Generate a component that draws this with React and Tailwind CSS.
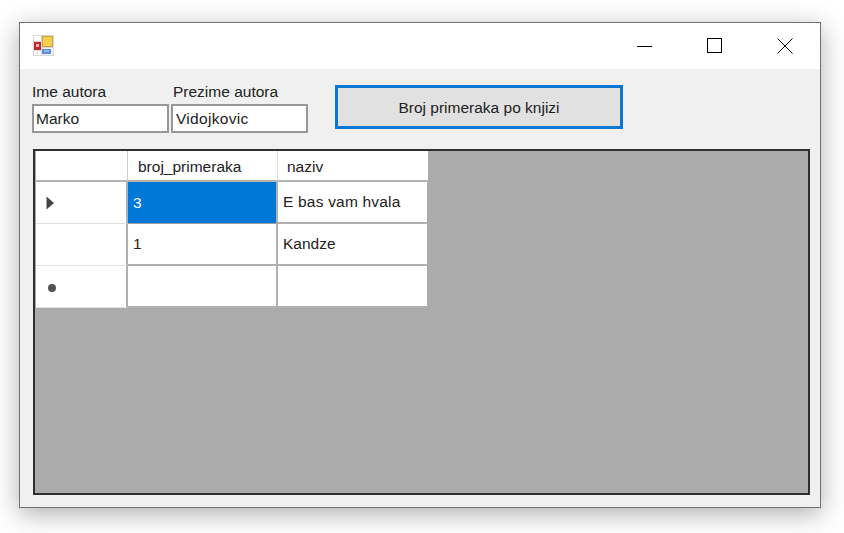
function AppIcon() {
  return (
    <svg width="21" height="21" viewBox="0 0 21 21" className="block mt-[-2px]">
      <rect x="0" y="0" width="21" height="21" fill="#d9d9d9" />
      <rect x="1" y="1" width="7" height="5" fill="#ffffff" />
      <rect x="1" y="7" width="7" height="8" fill="#c2262c" />
      <rect x="3" y="9" width="3" height="3" fill="#eeb0a8" />
      <rect x="1" y="16" width="3" height="4" fill="#ffffff" />
      <rect x="5" y="16" width="3" height="4" fill="#ffffff" />
      <rect x="9" y="1" width="11" height="11" fill="#c9a23a" />
      <rect x="10" y="2" width="9" height="9" fill="#fbcf4e" />
      <rect x="9" y="13" width="11" height="7" fill="#f2f2f2" />
      <rect x="9" y="14" width="9" height="5" fill="#5b8fd8" />
      <rect x="11" y="15" width="5" height="2" fill="#8fb8ee" />
    </svg>
  );
}

function Header({ className, children }) {
  return <div className={"flex items-center pt-[2px] bg-white text-[#222] " + className}>{children}</div>;
}

function Cell({ className, children }) {
  return <div className={"flex items-center pl-[5px] bg-white text-[#222] " + className}>{children}</div>;
}

export default function App() {
  return (
    <div className="w-[844px] h-[533px] bg-white pt-[22px] pl-[19px] overflow-hidden font-['Liberation_Sans',Arial,sans-serif] text-[15.5px] leading-[18px] text-[#222]">
      <div className="w-[802px] h-[486px] border border-[#717171] bg-[#f0f0f0] shadow-[0_6px_24px_rgba(0,0,0,0.32)] flex flex-col">
        {/* title bar */}
        <div className="h-[46px] bg-white flex items-center justify-between pl-[13px] shrink-0">
          <AppIcon />
          <div className="flex h-full">
            <div className="w-[70px] flex items-center justify-center">
              <svg width="16" height="16" viewBox="0 0 16 16"><path d="M0 8.5H15" stroke="#000" fill="none" /></svg>
            </div>
            <div className="w-[70px] flex items-center justify-center">
              <svg width="16" height="16" viewBox="0 0 16 16"><rect x="0.5" y="0.5" width="14" height="14" stroke="#000" fill="none" /></svg>
            </div>
            <div className="w-[70px] flex items-center justify-center">
              <svg width="16" height="16" viewBox="0 0 16 16"><path d="M0.5 0.5L15.5 15.5M15.5 0.5L0.5 15.5" stroke="#000" fill="none" /></svg>
            </div>
          </div>
        </div>

        {/* content */}
        <div className="flex-1 flex flex-col pl-[12px] pr-[10px] pb-[12px]">
          <div className="flex items-start h-[80px] pt-[13px]">
            <div className="flex flex-col w-[139px]">
              <label className="h-[22px] flex items-center leading-[18px] mt-[-1px]">Ime autora</label>
              <div className="w-[137px] h-[29px] mt-[1px] border-2 border-[#979797] bg-white flex items-center pl-[2px] leading-[18px]">Marko</div>
            </div>
            <div className="flex flex-col w-[164px]">
              <label className="h-[22px] pl-[2px] flex items-center leading-[18px] mt-[-1px]">Prezime autora</label>
              <div className="w-[137px] h-[29px] mt-[1px] border-2 border-[#979797] bg-white flex items-center pl-[3px] leading-[18px] tracking-[0.3px]">Vidojkovic</div>
            </div>
            <button className="w-[288px] h-[44px] mt-[3px] pt-[2px] border-[3px] border-[#0a78d2] bg-[#e1e1e1] flex items-center justify-center text-[#222] leading-[18px] text-center">
              Broj primeraka po knjizi
            </button>
          </div>

          {/* data grid */}
          <div className="flex-1 ml-[1px] border-2 border-[#2f2f2f] bg-[#ababab] pl-[1px]">
            <div className="grid grid-cols-[92px_150px_150px] grid-rows-[31px_42px_42px_42px] w-[392px]">
              <Header className="border-r border-r-[#d0d0d0] border-b-2 border-b-[#b4b4b4]" />
              <Header className="pl-[10px] border-r border-r-[#dcdcdc] border-b-2 border-b-[#b4b4b4]">broj_primeraka</Header>
              <Header className="pl-[9px] border-b-2 border-b-[#b4b4b4]">naziv</Header>

              <div className="bg-white flex items-center pl-[10px] border-r-2 border-r-[#b0b0b0] border-b border-b-[#e0e0e0]">
                <svg width="8" height="14" viewBox="0 0 8 14"><path d="M0.5 0.5L8 7L0.5 13.5Z" fill="#444" /></svg>
              </div>
              <div className="flex items-center pl-[5px] bg-[#0078d7] text-white border-b border-b-[#a0a0a0] border-r-2 border-r-[#b0b0b0]">3</div>
              <Cell className="border-b-2 border-b-[#b0b0b0] mr-[1px] tracking-[0.2px]">E bas vam hvala</Cell>

              <div className="bg-white border-r-2 border-r-[#b0b0b0] border-b border-b-[#e0e0e0]" />
              <Cell className="border-b-2 border-b-[#b0b0b0] border-r-2 border-r-[#b0b0b0]">1</Cell>
              <Cell className="border-b-2 border-b-[#b0b0b0] mr-[1px]">Kandze</Cell>

              <div className="bg-white flex items-center pl-[12px] border-r-2 border-r-[#b0b0b0] border-b border-b-[#e0e0e0]">
                <div className="w-[8px] h-[8px] rounded-full bg-[#555] mt-[2px]" />
              </div>
              <Cell className="border-b-2 border-b-[#b0b0b0] border-r-2 border-r-[#b0b0b0]" />
              <Cell className="border-b-2 border-b-[#b0b0b0] mr-[1px]" />
            </div>
          </div>
        </div>
      </div>
    </div>
  );
}
